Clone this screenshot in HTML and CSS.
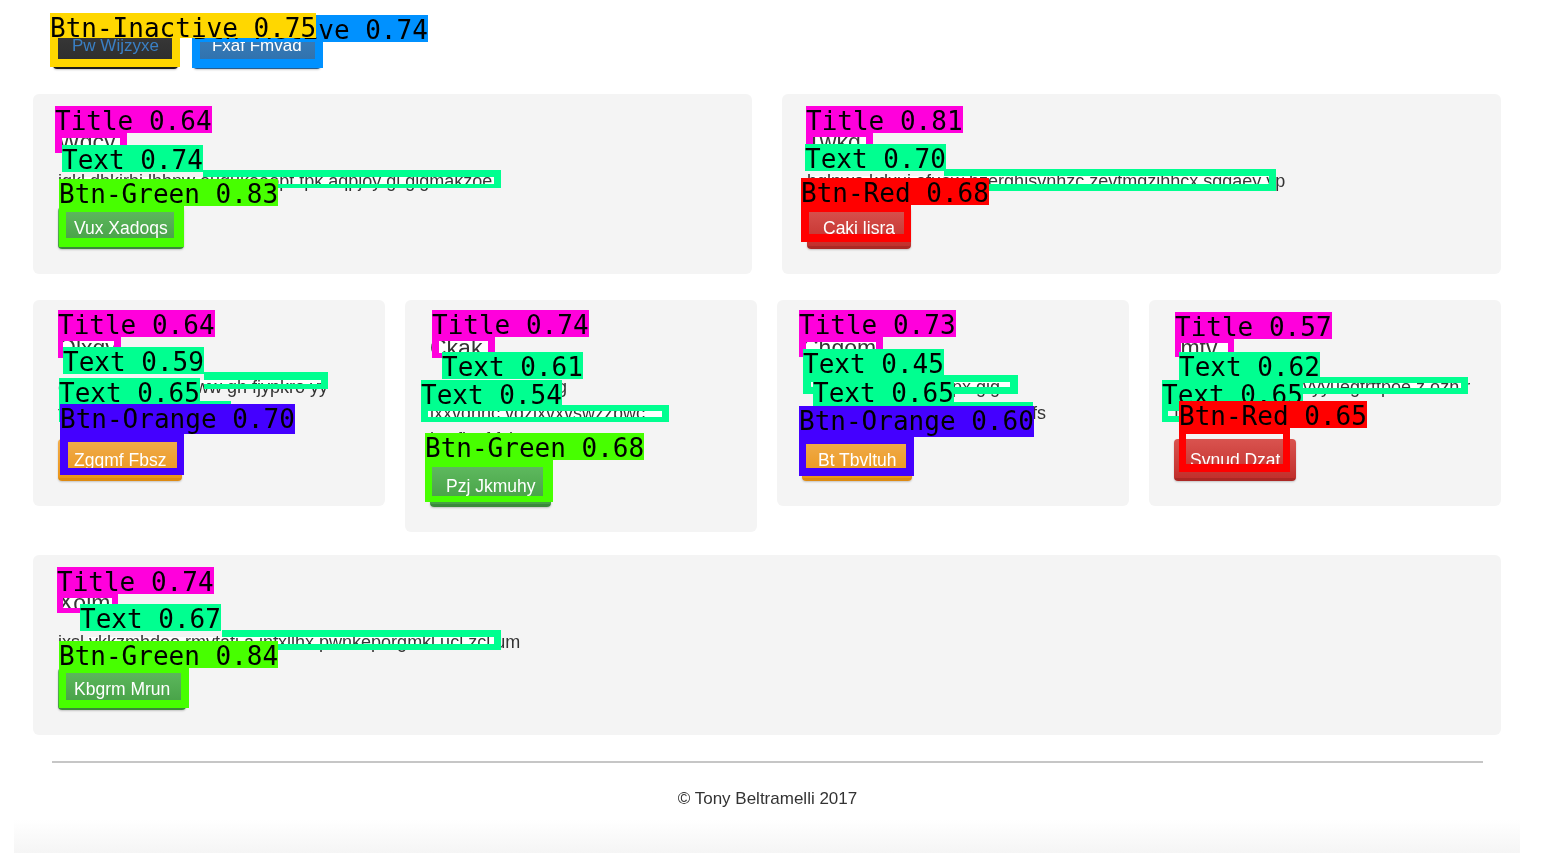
FILE: index.html
```html
<!DOCTYPE html>
<html lang="en">
<head>
<meta charset="utf-8">
<title>Detections</title>
<link rel="stylesheet" href="styles.css">
</head>
<body>
<div class="page">
  <nav class="topnav">
    <a class="btn btn-inactive">Pw Wijzyxe</a>
    <a class="btn btn-active">Fxaf Fmvad</a>
  </nav>

  <div class="row row-2">
    <div class="card">
      <h4>Wdcy</h4>
      <p>iqkl dhkjrhj lhbnw ouqukoeopt tpk aqpjoy gl gigmakzoe</p>
      <a class="btn btn-green">Vux Xadoqs</a>
    </div>
    <div class="card">
      <h4>Twkq</h4>
      <p>bqlnwo kdxuj ofuaw hzerghisvnhzc zevtmgzihhcx sggaey yp</p>
      <a class="btn btn-red">Caki lisra</a>
    </div>
  </div>

  <div class="row row-4">
    <div class="card">
      <h4>Olxqv</h4>
      <p>ozuxd vbnmqw www gh fjypkro yy<br>tqkzm hjslw</p>
      <a class="btn btn-orange">Zgqmf Fbsz</a>
    </div>
    <div class="card">
      <h4>Ckak</h4>
      <p>xhfwqo kadhureg<br>ixxvdnnc vdzixvxvswzzbwc<br>lxtxfjxuf fyb</p>
      <a class="btn btn-green">Pzj Jkmuhy</a>
    </div>
    <div class="card">
      <h4>Chgom</h4>
      <p>bcdhe wqpmyz ua px gig<br>hwnlkmqozep rtuvbnwoa zykfs</p>
      <a class="btn btn-orange">Bt Tbvltuh</a>
    </div>
    <div class="card">
      <h4>Imtv</h4>
      <p>qjthlwnkua mdz vyyuegtrttpoe z ozh r<br>fmotkh yd</p>
      <a class="btn btn-red">Svnud Dzat</a>
    </div>
  </div>

  <div class="row row-1">
    <div class="card">
      <h4>Xolm</h4>
      <p>ixsl vkkzmhdoo rmvtati a infxllhx pwnkeporgmkl ucl zcl um</p>
      <a class="btn btn-green">Kbgrm Mrun</a>
    </div>
  </div>

  <footer class="footer">© Tony Beltramelli 2017</footer>
</div>
<div class="bottom-strip"></div>

<div class="overlay">
  <!-- whitened interiors of detection boxes -->
  <div class="hl" style="left:62px;top:138px;width:58px;height:10px"></div>
  <div class="hl" style="left:69px;top:177px;width:425px;height:7px"></div>
  <div class="hl" style="left:813px;top:137px;width:53px;height:10px"></div>
  <div class="hl" style="left:812px;top:176px;width:457px;height:8px"></div>
  <div class="hl" style="left:63px;top:341px;width:51px;height:12px"></div>
  <div class="hl" style="left:70px;top:380px;width:251px;height:4px"></div>
  <div class="hl" style="left:439px;top:341px;width:49px;height:12px"></div>
  <div class="hl" style="left:428px;top:411px;width:234px;height:6px"></div>
  <div class="hl" style="left:806px;top:342px;width:70px;height:10px"></div>
  <div class="hl" style="left:811px;top:382px;width:199px;height:5px"></div>
  <div class="hl" style="left:1181px;top:343px;width:47px;height:9px"></div>
  <div class="hl" style="left:1186px;top:383px;width:275px;height:5px"></div>
  <div class="hl" style="left:63px;top:598px;width:49px;height:10px"></div>
  <div class="hl" style="left:88px;top:637px;width:406px;height:7px"></div>

  <!-- nav -->
  <div class="det-box k-active" style="left:192px;top:38px;width:131px;height:30px;border-width:0 8px 9px 8px"></div>
  <div class="det-lbl k-active" style="left:193px;top:15px">Btn-Active 0.74</div>
  <div class="det-box k-inactive" style="left:50px;top:36px;width:130px;height:31px;border-width:0 8px 8px 8px"></div>
  <div class="det-lbl k-inactive short" style="left:50px;top:13px">Btn-Inactive 0.75</div>

  <!-- card 1 -->
  <div class="det-box k-title" style="left:55px;top:133px;width:72px;height:20px;border-width:5px 7px 5px 7px"></div>
  <div class="det-lbl k-title" style="left:55px;top:106px">Title 0.64</div>
  <div class="det-box k-text" style="left:203px;top:170px;width:298px;height:18px;border-width:7px 7px 4px 0"></div>
  <div class="det-lbl k-text" style="left:62px;top:145px">Text 0.74</div>
  <div class="det-box k-green" style="left:59px;top:205px;width:125px;height:42px;border-width:7px 10px 9px 7px"></div>
  <div class="det-lbl k-green" style="left:59px;top:179px">Btn-Green 0.83</div>

  <!-- card 2 -->
  <div class="det-box k-title" style="left:806px;top:132px;width:67px;height:20px;border-width:5px 7px 5px 7px"></div>
  <div class="det-lbl k-title" style="left:806px;top:106px">Title 0.81</div>
  <div class="det-box k-text" style="left:944px;top:169px;width:332px;height:22px;border-width:7px 7px 7px 0"></div>
  <div class="det-lbl k-text" style="left:805px;top:144px">Text 0.70</div>
  <div class="det-box k-red" style="left:801px;top:203px;width:110px;height:39px;border-width:9px 7px 8px 8px"></div>
  <div class="det-lbl k-red" style="left:801px;top:178px">Btn-Red 0.68</div>

  <!-- card A -->
  <div class="det-box k-title" style="left:58px;top:336px;width:63px;height:22px;border-width:5px 7px 5px 5px"></div>
  <div class="det-lbl k-title" style="left:58px;top:310px">Title 0.64</div>
  <div class="det-box k-text" style="left:204px;top:372px;width:124px;height:17px;border-width:8px 7px 5px 0"></div>
  <div class="det-lbl k-text" style="left:63px;top:347px">Text 0.59</div>
  <div class="det-box k-text" style="left:59px;top:401px;width:172px;height:21px;border-width:4px"></div>
  <div class="det-lbl k-text" style="left:59px;top:378px">Text 0.65</div>
  <div class="det-box k-orange" style="left:60px;top:434px;width:124px;height:41px;border-width:8px 7px 7px 8px"></div>
  <div class="det-lbl k-orange" style="left:60px;top:404px;height:30px">Btn-Orange 0.70</div>

  <!-- card B -->
  <div class="det-box k-title" style="left:432px;top:336px;width:63px;height:22px;border-width:5px 7px 5px 7px"></div>
  <div class="det-lbl k-title" style="left:432px;top:310px">Title 0.74</div>
  <div class="det-lbl k-text" style="left:442px;top:352px">Text 0.61</div>
  <div class="det-box k-text" style="left:421px;top:405px;width:248px;height:17px;border-width:6px 7px 5px 7px"></div>
  <div class="det-lbl k-text" style="left:421px;top:380px">Text 0.54</div>
  <div class="det-box k-green" style="left:425px;top:459px;width:128px;height:43px;border-width:8px 10px 6px 7px"></div>
  <div class="det-lbl k-green" style="left:425px;top:433px">Btn-Green 0.68</div>

  <!-- card C -->
  <div class="det-box k-title" style="left:799px;top:337px;width:84px;height:20px;border-width:5px 7px 5px 7px"></div>
  <div class="det-lbl k-title" style="left:799px;top:310px">Title 0.73</div>
  <div class="det-box k-text" style="left:803px;top:375px;width:215px;height:19px;border-width:7px 8px 7px 8px"></div>
  <div class="det-lbl k-text" style="left:803px;top:349px">Text 0.45</div>
  <div class="det-box k-text" style="left:813px;top:402px;width:220px;height:18px;border-width:4px"></div>
  <div class="det-lbl k-text" style="left:813px;top:378px">Text 0.65</div>
  <div class="det-box k-orange" style="left:799px;top:437px;width:115px;height:39px;border-width:7px 8px 8px 7px"></div>
  <div class="det-lbl k-orange" style="left:799px;top:406px;height:31px">Btn-Orange 0.60</div>

  <!-- card D -->
  <div class="det-box k-title" style="left:1175px;top:338px;width:59px;height:19px;border-width:5px 6px 5px 6px"></div>
  <div class="det-lbl k-title" style="left:1175px;top:312px">Title 0.57</div>
  <div class="det-box k-text" style="left:1179px;top:377px;width:289px;height:17px;border-width:6px 7px 6px 0"></div>
  <div class="det-lbl k-text" style="left:1179px;top:352px">Text 0.62</div>
  <div class="det-box k-text" style="left:1162px;top:405px;width:141px;height:17px;border-width:6px"></div>
  <div class="det-lbl k-text" style="left:1162px;top:380px">Text 0.65</div>
  <div class="det-box k-red" style="left:1179px;top:427px;width:111px;height:45px;border-width:7px 7px 8px 7px"></div>
  <div class="det-lbl k-red" style="left:1179px;top:401px">Btn-Red 0.65</div>

  <!-- row 3 -->
  <div class="det-box k-title" style="left:57px;top:593px;width:61px;height:20px;border-width:5px 6px 5px 6px"></div>
  <div class="det-lbl k-title" style="left:57px;top:567px">Title 0.74</div>
  <div class="det-box k-text" style="left:222px;top:630px;width:279px;height:20px;border-width:7px 7px 6px 0"></div>
  <div class="det-lbl k-text" style="left:80px;top:604px">Text 0.67</div>
  <div class="det-box k-green" style="left:59px;top:667px;width:130px;height:41px;border-width:6px 8px 8px 7px"></div>
  <div class="det-lbl k-green" style="left:59px;top:641px">Btn-Green 0.84</div>
</div>
</body>
</html>
```

FILE: styles.css
```css
* { box-sizing: border-box; }

html, body {
  margin: 0;
  padding: 0;
  overflow: hidden;
  background: #fff;
}

body {
  font-family: "Liberation Sans", Arial, sans-serif;
  color: #333;
  width: 1563px;
  height: 853px;
}

.page {
  width: 1468px;
  margin-left: 33px;
  padding-top: 27px;
}

.topnav {
  display: flex;
  gap: 15px;
  padding-left: 20px;
  margin-bottom: 25px;
}

.btn {
  display: inline-block;
  font-size: 17.5px;
  line-height: 20px;
  padding: 11px 16px 8px;
  border-radius: 4px;
  border-bottom: 3px solid;
  color: #fff;
  white-space: nowrap;
  box-shadow: 0 1px 2px rgba(0, 0, 0, 0.2);
}

.topnav .btn { padding: 9px 19px 10px; font-size: 17px; }

.btn-inactive {
  background: linear-gradient(#3a3a3a, #2c2c2c);
  border-bottom-color: #1c1c1c;
  color: #3a7fc4;
}
.btn-active {
  background: linear-gradient(#3a80be, #2f70ab);
  border-bottom-color: #275d8e;
}
.btn-green {
  background: linear-gradient(#5fba5f, #459f45);
  border-bottom-color: #3a893a;
}
.btn-red {
  background: linear-gradient(#d9534f, #c2302c);
  border-bottom-color: #ab2824;
}
.btn-orange {
  background: linear-gradient(#f0ad4e, #eb9519);
  border-bottom-color: #dd8a12;
}

.row {
  display: grid;
  align-items: start;
  margin-bottom: 26px;
}
.row-2 { grid-template-columns: 1fr 1fr; column-gap: 30px; }
.row-4 { grid-template-columns: repeat(4, 1fr); column-gap: 20px; margin-bottom: 23px; }
.row-1 { grid-template-columns: 1fr; }

.card {
  background: #f4f4f4;
  border-radius: 6px;
  padding: 36px 25px 25px;
}

.card h4 {
  margin: 0 0 13px;
  font-size: 23px;
  line-height: 25px;
  font-weight: normal;
  color: #333;
}

.card p {
  margin: 0 0 13px;
  font-size: 18px;
  line-height: 26px;
  color: #333;
  white-space: nowrap;
}

.footer {
  margin: 0 18px 0 19px;
  border-top: 2px solid #c6c6c6;
  padding-top: 26px;
  text-align: center;
  font-size: 17px;
  line-height: 20px;
  color: #333;
}

.bottom-strip {
  margin: 11px 0 0 14px;
  width: 1506px;
  height: 33px;
  background: linear-gradient(#ffffff, #f5f5f5);
}

/* detection overlay */
.overlay {
  position: absolute;
  left: 0;
  top: 0;
}

.hl {
  position: absolute;
  background: #0c0c0c;
  mix-blend-mode: color-dodge;
}

.det-box {
  position: absolute;
  border-style: solid;
  border-color: var(--c);
}

.det-lbl {
  position: absolute;
  height: 27px;
  background: var(--c);
  font-family: "DejaVu Sans Mono", monospace;
  font-size: 26px;
  line-height: 31px;
  color: #000;
  white-space: pre;
}
.det-lbl.short { height: 25px; }

.k-title { --c: #ff00dc; }
.k-text { --c: #00ff90; }
.k-green { --c: #47ff00; }
.k-orange { --c: #4400ff; }
.k-red { --c: #ff0000; }
.k-inactive { --c: #ffd700; }
.k-active { --c: #0091ff; }
```
